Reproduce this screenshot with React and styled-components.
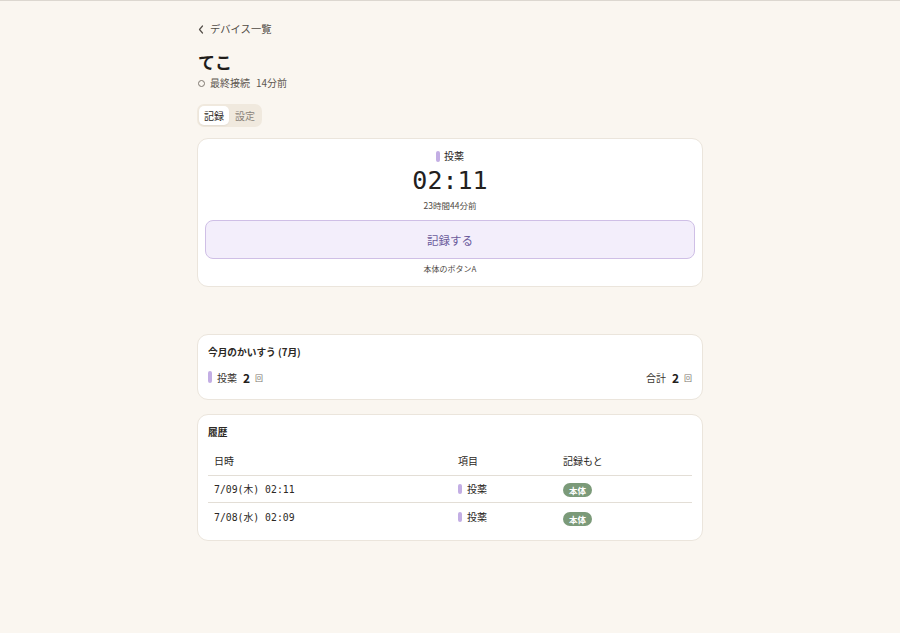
import styled, { createGlobalStyle } from "styled-components";

const GlobalStyle = createGlobalStyle`
  html, body {
    margin: 0;
    padding: 0;
    background: #faf6f0;
  }
  body {
    border-top: 1px solid #dcd7d0;
    font-family: "Noto Sans CJK JP", "Noto Sans", sans-serif;
    color: #2b2824;
  }
`;

const mono = `"DejaVu Sans Mono", "Liberation Mono", "Noto Sans CJK JP", monospace`;

const Page = styled.div`
  width: 506px;
  margin: 0 auto;
  padding-top: 20px;
  display: flex;
  flex-direction: column;
`;

const BackLink = styled.a`
  display: flex;
  align-items: center;
  gap: 6px;
  font-size: 10.3px;
  line-height: 16px;
  color: #4f4a44;
  text-decoration: none;
  padding-left: 1px;
`;

const Title = styled.h1`
  margin: 13px 0 0 1px;
  font-size: 17px;
  font-weight: 700;
  line-height: 24px;
  color: #1f1c19;
`;

const Status = styled.div`
  margin-top: 1px;
  display: flex;
  align-items: center;
  gap: 5px;
  font-size: 10px;
  color: #5e5851;
  line-height: 16px;
  span + span {
    margin-left: 1px;
  }
`;

const Dot = styled.i`
  width: 5px;
  height: 5px;
  border: 1px solid #7e7870;
  border-radius: 50%;
  margin-left: 1px;
`;

const Tabs = styled.div`
  align-self: flex-start;
  display: flex;
  gap: 1px;
  margin-top: 13px;
  padding: 2px;
  background: #f0e9de;
  border-radius: 7px;
`;

const Tab = styled.button`
  border: none;
  font-family: inherit;
  font-size: 10px;
  padding: 0 5px;
  height: 19px;
  line-height: 19px;
  border-radius: 5px;
  background: ${(p) => (p.$active ? "#ffffff" : "transparent")};
  color: ${(p) => (p.$active ? "#2b2824" : "#8b847b")};
  box-shadow: ${(p) => (p.$active ? "0 1px 2px rgba(0,0,0,0.06)" : "none")};
`;

const Card = styled.section`
  background: #ffffff;
  border: 1px solid #ebe5dc;
  border-radius: 11px;
  margin-top: ${(p) => p.$mt || 0}px;
  padding: ${(p) => p.$pad || "10px"};
  display: flex;
  flex-direction: column;
`;

const Bar = styled.i`
  display: inline-block;
  flex-shrink: 0;
  width: 4px;
  height: ${(p) => p.$h || 11}px;
  border-radius: 2px;
  background: #c3aee4;
`;

const Label = styled.div`
  display: flex;
  align-items: center;
  justify-content: center;
  gap: 4px;
  font-size: 10px;
  color: #2b2824;
  line-height: 14px;
`;

const Clock = styled.div`
  text-align: center;
  font-family: ${mono};
  font-size: 25px;
  line-height: 28px;
  color: #23201d;
  margin-top: 4px;
`;

const Ago = styled.div`
  text-align: center;
  font-size: 8.5px;
  color: #4f4a44;
  margin-top: 4px;
  line-height: 12px;
`;

const RecordButton = styled.button`
  margin-top: 9px;
  height: 39px;
  border: 1px solid #cfbfe6;
  border-radius: 8px;
  background: #f3eefb;
  color: #6c5c9c;
  font-family: inherit;
  font-size: 11.5px;
`;

const Hint = styled.div`
  text-align: center;
  font-size: 8px;
  color: #4f4a44;
  margin-top: 4px;
  line-height: 12px;
`;

const CardTitle = styled.h2`
  margin: 0;
  font-size: 9.7px;
  font-weight: 700;
  line-height: 14px;
  color: #2b2824;
`;

const CountRow = styled.div`
  display: flex;
  justify-content: space-between;
  align-items: center;
  margin-top: 10px;
  height: 16px;
`;

const Count = styled.div`
  display: flex;
  align-items: center;
  gap: 5px;
  font-size: 10px;
  color: #3a3631;
  b {
    font-size: 12px;
    font-weight: 700;
    color: #23201d;
    margin-left: 1px;
  }
  small {
    font-size: 8px;
    color: #7a746c;
  }
`;

const Table = styled.table`
  margin-top: 8px;
  width: 100%;
  table-layout: fixed;
  border-collapse: collapse;
  font-size: 10px;
  th {
    text-align: left;
    font-weight: 400;
    color: #2b2824;
    padding: 7px 6px;
    border-bottom: 1px solid #e3ded6;
    line-height: 14px;
  }
  td {
    padding: 6px 6px 5px;
    line-height: 14px;
    color: #2b2824;
  }
  tbody tr + tr td {
    border-top: 1px solid #e3ded6;
    padding-top: 7px;
  }
`;

const Col = styled.col`
  width: ${(p) => p.$w};
`;

const DateCell = styled.td`
  font-family: ${mono};
  font-size: 9.8px;
`;

const ItemCell = styled.td`
  span {
    display: inline-flex;
    align-items: center;
    gap: 5px;
  }
`;

const Badge = styled.span`
  display: inline-block;
  vertical-align: middle;
  background: #7b9a79;
  color: #ffffff;
  font-size: 8.5px;
  font-weight: 700;
  line-height: 14px;
  padding: 0 6px;
  border-radius: 7px;
`;

const history = [
  { date: "7/09(木) 02:11" },
  { date: "7/08(水) 02:09" },
];

export default function App() {
  return (
    <>
      <GlobalStyle />
      <Page>
        <BackLink href="#">
          <svg width="6" height="9" viewBox="0 0 6 9">
            <path d="M4.5 1 L1.5 4.5 L4.5 8" fill="none" stroke="#55504a" strokeWidth="1.2" strokeLinecap="round" strokeLinejoin="round" />
          </svg>
          デバイス一覧
        </BackLink>
        <Title>てこ</Title>
        <Status>
          <Dot />
          <span>最終接続</span>
          <span>14分前</span>
        </Status>
        <Tabs>
          <Tab $active>記録</Tab>
          <Tab>設定</Tab>
        </Tabs>

        <Card $mt={11} $pad="10px 7px 11px">
          <Label>
            <Bar $h={11} />
            投薬
          </Label>
          <Clock>02:11</Clock>
          <Ago>23時間44分前</Ago>
          <RecordButton>記録する</RecordButton>
          <Hint>本体のボタンA</Hint>
        </Card>

        <Card $mt={47} $pad="10px 10px 14px">
          <CardTitle>今月のかいすう (7月)</CardTitle>
          <CountRow>
            <Count>
              <Bar $h={12} />
              投薬<b>2</b><small>回</small>
            </Count>
            <Count>
              合計<b>2</b><small>回</small>
            </Count>
          </CountRow>
        </Card>

        <Card $mt={14} $pad="10px 10px 9px">
          <CardTitle>履歴</CardTitle>
          <Table>
            <colgroup>
              <Col $w="244px" />
              <Col $w="105px" />
              <Col $w="auto" />
            </colgroup>
            <thead>
              <tr>
                <th>日時</th>
                <th>項目</th>
                <th>記録もと</th>
              </tr>
            </thead>
            <tbody>
              {history.map((h) => (
                <tr key={h.date}>
                  <DateCell>{h.date}</DateCell>
                  <ItemCell>
                    <span>
                      <Bar $h={10} />
                      投薬
                    </span>
                  </ItemCell>
                  <td>
                    <Badge>本体</Badge>
                  </td>
                </tr>
              ))}
            </tbody>
          </Table>
        </Card>
      </Page>
    </>
  );
}
